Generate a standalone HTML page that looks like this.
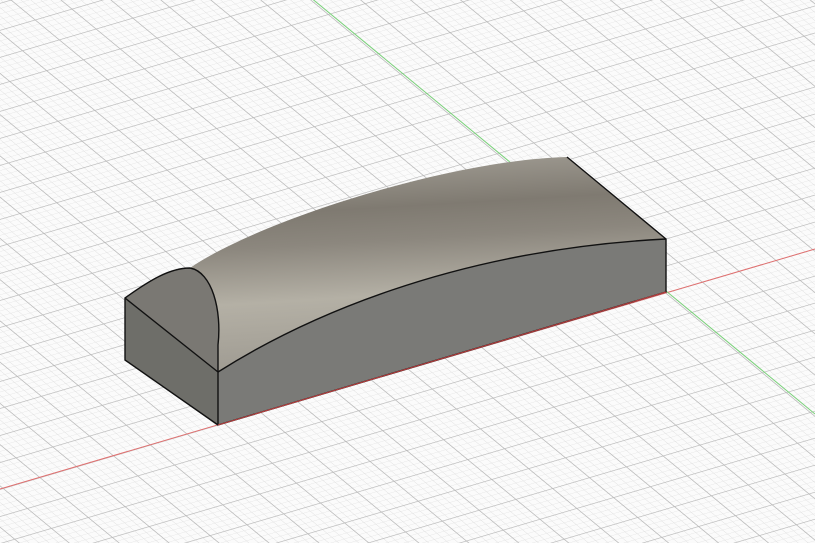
<!DOCTYPE html>
<html><head><style>html,body{margin:0;padding:0;background:#fafafa;overflow:hidden}svg{display:block}</style></head>
<body>
<svg width="815" height="543" viewBox="0 0 815 543" xmlns="http://www.w3.org/2000/svg">
<defs>
<pattern id="minor" patternUnits="userSpaceOnUse" width="1" height="1" patternTransform="matrix(7.36 -2.17 4.82 3.98 665 293)">
<path d="M0 0H1M0 0V1" stroke="#dedede" stroke-width="0.13" fill="none"/>
</pattern>
<pattern id="major" patternUnits="userSpaceOnUse" width="1" height="1" patternTransform="matrix(36.8 -10.86 24.1 19.9 665 293)">
<path d="M0 0H1M0 0V1" stroke="#b8b8b8" stroke-width="0.045" fill="none"/>
</pattern>
<linearGradient id="top" x1="0" y1="0" x2="0.15" y2="1">
<stop offset="0" stop-color="#aaa69d"/>
<stop offset="0.3" stop-color="#7f7a71"/>
<stop offset="0.45" stop-color="#8c877e"/>
<stop offset="0.7" stop-color="#b4b0a5"/>
<stop offset="1" stop-color="#a09c93"/>
</linearGradient>
</defs>
<rect width="815" height="543" fill="#fbfbfb"/>
<rect width="815" height="543" fill="url(#minor)"/>
<rect width="815" height="543" fill="url(#major)"/>
<line x1="0" y1="489" x2="815" y2="249" stroke="#e07070" stroke-width="1"/>
<line x1="310" y1="-3" x2="815" y2="414" stroke="#7ad07a" stroke-width="1"/>
<path d="M125 298 C150 280,170 270,190 268 C260 220,450 160,567 157 L666 239 C450 250,300 320,218 372 C220 330,215 280,190 268 Z" fill="url(#top)"/>
<path d="M125 298 C150 280,170 268,190 268 C212 272,222 310,218 345 L218 372 Z" fill="#7a7873"/>
<path d="M125 298 L218 372 L218 425 L125 360 Z" fill="#6e6e69"/>
<path d="M218 372 C300 320,450 250,666 239 L666 292 L218 425 Z" fill="#7a7a77"/>
<g fill="none" stroke="#111" stroke-width="1.4" stroke-linejoin="round">
<path d="M125 298 L218 372 L218 425 L125 360 Z"/>
<path d="M218 372 C300 320,450 250,666 239 L666 292 L218 425"/>
<path d="M567 157 L666 239"/>
<path d="M125 298 C150 280,170 268,190 268 C212 272,222 310,218 345 L218 372"/>
</g>
<path d="M218 425 L666 292" stroke="#c04040" stroke-width="1"/>
</svg>
</body></html>
